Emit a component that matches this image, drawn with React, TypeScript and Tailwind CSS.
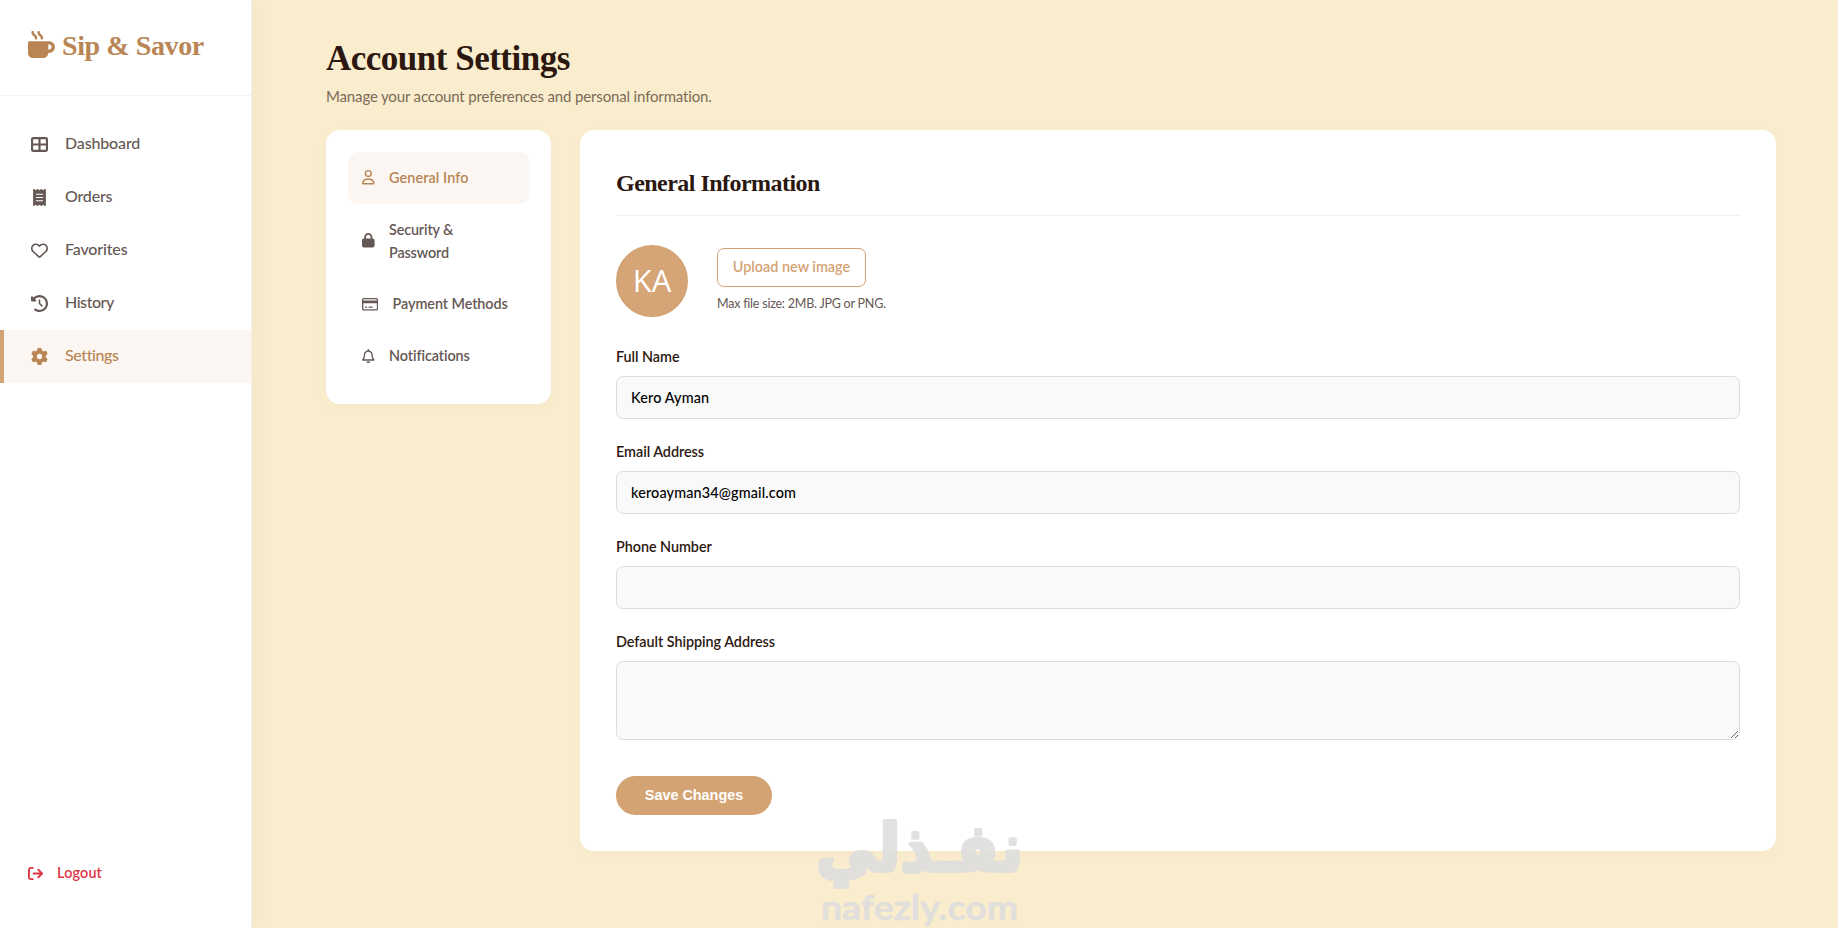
import React from 'react';
import {
  FaArrowRightFromBracket,
  FaClockRotateLeft,
  FaGear,
  FaLock,
  FaMugHot,
  FaReceipt,
  FaRegBell,
  FaRegCreditCard,
  FaRegHeart,
  FaRegUser,
  FaTableCellsLarge,
} from 'react-icons/fa6';

const navItems = [
  { label: 'Dashboard', icon: FaTableCellsLarge, tracking: 'tracking-[-0.15px]' },
  { label: 'Orders', icon: FaReceipt, tracking: 'tracking-[-0.2px]' },
  { label: 'Favorites', icon: FaRegHeart, tracking: 'tracking-[-0.15px]' },
  { label: 'History', icon: FaClockRotateLeft, tracking: 'tracking-[-0.45px]' },
  { label: 'Settings', icon: FaGear, tracking: 'tracking-[-0.4px]', active: true },
];

const tabs = [
  { label: 'General Info', icon: FaRegUser, iconWidth: 'w-[12.6px]', tracking: 'tracking-[0.1px]', active: true },
  { label: 'Security & Password', icon: FaLock, iconWidth: 'w-[12.6px]', tracking: 'tracking-[-0.15px]' },
  { label: 'Payment Methods', icon: FaRegCreditCard, iconWidth: 'w-[16.2px]', tracking: 'tracking-[-0.08px]' },
  { label: 'Notifications', icon: FaRegBell, iconWidth: 'w-[12.6px]', tracking: 'tracking-[-0.08px]' },
];

const Sidebar: React.FC = () => {
  return (
    <aside className="relative z-10 flex w-[252px] shrink-0 flex-col border-r border-[#f1f1f1] bg-white shadow-[4px_0_20px_rgba(0,0,0,0.03)]">
      <div className="flex h-24 items-start border-b border-[#f3f3f3] pt-7 pl-7 text-[#b98555]">
        <FaMugHot className="mt-[3px] h-[27px] w-[27px]" />
        <span className="ml-[7px] font-['Liberation_Serif',serif] text-[28px] leading-9 font-bold tracking-[-0.4px]">
          Sip &amp; Savor
        </span>
      </div>
      <nav className="mt-[22px] flex-1">
        {navItems.map(({ label, icon: Icon, tracking, active }) => (
          <a
            key={label}
            className={`flex h-[53px] items-center border-l-4 pl-[27px] ${
              active ? 'border-[#d4a373] bg-[#fbf6f1] text-[#b98555]' : 'border-transparent text-[#655854]'
            }`}
          >
            <Icon className="h-[17px] w-[17px]" />
            <span className={`mb-[3px] ml-[17px] text-base font-medium ${tracking}`}>{label}</span>
          </a>
        ))}
      </nav>
      <a className="mb-[43px] ml-7 flex h-6 items-center text-[#dc3545]">
        <FaArrowRightFromBracket className="h-[15px] w-[15px]" />
        <span className="ml-[14px] text-[14.4px] font-semibold tracking-[0.15px]">Logout</span>
      </a>
    </aside>
  );
};

const Tabs: React.FC = () => {
  return (
    <div className="w-[225px] shrink-0 rounded-[14px] bg-white py-[22px] pr-[21px] pl-[22px] shadow-[0_4px_20px_rgba(0,0,0,0.02)]">
      {tabs.map(({ label, icon: Icon, iconWidth, tracking, active }) => (
        <a
          key={label}
          className={`flex items-center gap-[14.4px] rounded-[10px] px-[14px] pt-[13.9px] pb-[14.9px] text-[14.4px] leading-[23px] font-semibold ${
            active ? 'bg-[#fbf6f1] text-[#b98555]' : 'text-[#655854]'
          }`}
        >
          <Icon className={`h-[14.4px] shrink-0 ${iconWidth}`} />
          <span className={tracking}>{label}</span>
        </a>
      ))}
    </div>
  );
};

const labelClass = 'mb-2 block text-[14.4px] leading-[23px] font-semibold tracking-[-0.05px] text-[#2c1810]';
const inputClass =
  'block w-full rounded-[7px] border border-[#dddddd] bg-[#f9f9f9] px-[14px] text-[14.4px] text-black outline-none';

const Field: React.FC<{ label: string; value?: string }> = ({ label, value = '' }) => {
  return (
    <div className="mb-[21px]">
      <label className={labelClass}>{label}</label>
      <input className={`${inputClass} h-[43px] pb-px font-medium tracking-[0.15px]`} defaultValue={value} />
    </div>
  );
};

const GeneralInfo: React.FC = () => {
  return (
    <section className="flex-1 rounded-[14px] bg-white p-9 shadow-[0_4px_20px_rgba(0,0,0,0.02)]">
      <h2 className="mb-[29px] h-[50px] border-b border-[#f0f0f0] font-['Liberation_Serif',serif] text-2xl leading-[35px] font-bold tracking-[-0.53px] text-[#2c1810]">
        General Information
      </h2>
      <div className="mb-7 flex h-[72px] items-start gap-[29px]">
        <div className="flex size-[72px] items-center justify-center rounded-full border-2 border-[#d4a373] bg-[#d6a577] pb-0.5 font-['Open_Sans',sans-serif] text-[31px] text-white">
          KA
        </div>
        <div className="pt-[3px]">
          <button className="h-[39px] w-[149px] rounded-[7px] border border-[#d4a373] pb-px text-[14.4px] font-semibold text-[#d4a373]">
            Upload new image
          </button>
          <p className="mt-[7px] text-[12.5px] leading-5 tracking-[-0.22px] text-[#655854]">
            Max file size: 2MB. JPG or PNG.
          </p>
        </div>
      </div>
      <Field label="Full Name" value="Kero Ayman" />
      <Field label="Email Address" value="keroayman34@gmail.com" />
      <Field label="Phone Number" />
      <label className={labelClass}>Default Shipping Address</label>
      <textarea className={`${inputClass} h-[79px] resize-y`} />
      <button className="mt-9 h-[39px] w-[156px] rounded-full bg-[#d4a373] font-['Liberation_Sans',sans-serif] text-[14.4px] font-bold text-white">
        Save Changes
      </button>
    </section>
  );
};

const Watermark: React.FC = () => {
  return (
    <svg
      className="pointer-events-none absolute top-[788px] left-[760px] z-20 opacity-90"
      width="320"
      height="140"
      fill="#dedede"
      stroke="#dedede"
      strokeLinejoin="round"
    >
      <text
        x="263"
        y="83"
        direction="rtl"
        textLength="207"
        lengthAdjust="spacingAndGlyphs"
        strokeWidth="4"
        className="font-['DejaVu_Sans',sans-serif] text-[66px] font-bold"
      >
        نفـذلي
      </text>
      <text
        x="61"
        y="132"
        textLength="197"
        lengthAdjust="spacingAndGlyphs"
        strokeWidth="0.5"
        className="font-['Lato',sans-serif] text-[35px] font-bold"
      >
        nafezly.com
      </text>
    </svg>
  );
};

const App: React.FC = () => {
  return (
    <div className="relative flex h-[928px] overflow-hidden bg-[#faedcd] font-['Lato',sans-serif]">
      <Sidebar />
      <main className="flex-1 pt-[39px] pr-[62px] pl-[74px]">
        <h1 className="mb-[5px] font-['Liberation_Serif',serif] text-[35px] leading-10 font-bold tracking-[-0.5px] text-[#2c1810]">
          Account Settings
        </h1>
        <p className="mb-[22px] text-[15px] leading-6 tracking-[-0.15px] text-[#7a6a58]">
          Manage your account preferences and personal information.
        </p>
        <div className="flex items-start gap-[29px]">
          <Tabs />
          <GeneralInfo />
        </div>
      </main>
      <Watermark />
    </div>
  );
};

export default App;
